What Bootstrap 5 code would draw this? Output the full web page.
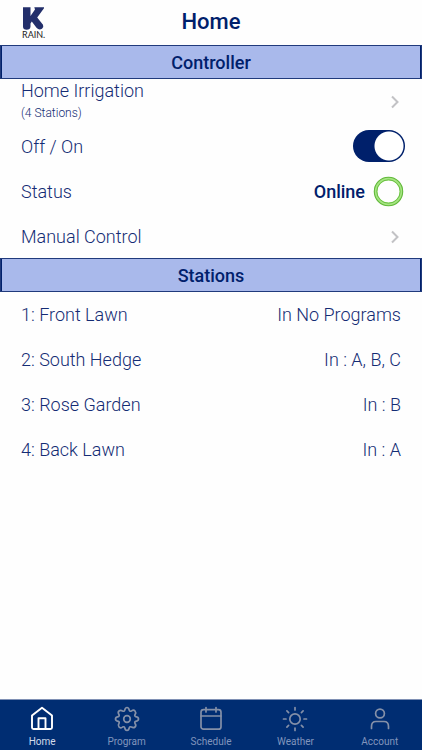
<!DOCTYPE html>
<html lang="en">
<head>
<meta charset="utf-8">
<meta name="viewport" content="width=device-width, initial-scale=1">
<title>Home</title>
<link href="https://cdn.jsdelivr.net/npm/bootstrap@5.3.0/dist/css/bootstrap.min.css" rel="stylesheet">
<style>
  :root { --navy: #00206b; --ink: #142c74; --tab: #002d72; --band: #a9b9eb; }
  body { font-family: Roboto, "Liberation Sans", sans-serif; color: var(--ink); background: #fefefe; }
  .app-header { height: 45px; padding-top: 5px; color: var(--navy); }
  .app-title { font-size: 22px; line-height: 34px; font-weight: 500; }
  .brand-logo { left: 21px; top: 6px; }
  .band-title { height: 34px; line-height: 34px; font-size: 18px; font-weight: 500; color: var(--navy);
    background: var(--band); border: 1px solid #203a7c; box-shadow: inset 1px 0 var(--navy), inset -1px 0 var(--navy); }
  .setting-list { margin-top: -1px; }
  .setting-row { height: 45px; padding: 2px 21px 0; font-size: 18px; line-height: 22px; font-weight: 300; color: var(--ink); }
  .setting-row .sub-label { font-size: 12px; }
  .status-word { font-weight: 500; color: var(--navy); }
  .chevron-icon { margin-right: 1px; }
  .status-row { padding-right: 18px; }
  .switch-row { padding-right: 17px; }
  .setting-row .form-check-input { width: 52px; height: 32px; margin: 0 0 2px; border: 0; border-radius: 16px; float: none;
    background: #b9bfce radial-gradient(circle at center, #fff 14px, transparent 15px) no-repeat left 1px center / 30px 30px; }
  .setting-row .form-check-input:checked { background-color: var(--navy);
    background-image: radial-gradient(circle at center, #fff 14px, transparent 15px); background-position: right 1px center; }
  .tab-strip { background: var(--tab); border-top: 1px solid #7f90b4; height: 51px; }
  .tab-link { color: #8195bd; font-size: 10px; line-height: 14px; padding-top: 6px; }
  .tab-link svg { color: #8490a8; margin-bottom: 3px; }
  .tab-link.current, .tab-link.current svg { color: #fff; }
  .tab-link.current span { color: #d3dbea; }
</style>
<script src="https://cdn.jsdelivr.net/npm/bootstrap@5.3.0/dist/js/bootstrap.bundle.min.js"></script>
</head>
<body class="d-flex flex-column min-vh-100">
<header class="app-header position-relative text-center">
  <svg class="brand-logo position-absolute" width="26" height="34" viewBox="0 0 26 34" role="img" aria-label="K-Rain">
    <path d="M2 1.200H9.500V10L14 3.500L13.300 1.200H23V2.200L16.200 11.500L22 18.800Q23 21.200 21 22.800Q18 24.500 15.500 21.800L10.800 15.500L9.500 17.500V20.500Q9.300 23.800 5.700 23.800Q2 23.800 2 20.500Z" fill="#232f6b"/>
    <text x="1" y="32" font-family="Lato, sans-serif" font-size="9" fill="#222">RAIN.</text>
  </svg>
  <h1 class="app-title m-0">Home</h1>
</header>

<main class="flex-grow-1">
  <section>
    <h2 class="band-title text-center m-0">Controller</h2>
    <div class="setting-list">
      <a href="#controller" class="setting-row d-flex align-items-center justify-content-between text-decoration-none">
        <span><span class="d-block">Home Irrigation</span><span class="sub-label d-block">(4 Stations)</span></span>
        <svg class="chevron-icon" width="10" height="14" viewBox="0 0 10 14" fill="none" stroke="#c2c2c5" stroke-width="2" aria-hidden="true"><path d="M2 1.500L7.500 7L2 12.500"/></svg>
      </a>
      <div class="setting-row switch-row form-switch d-flex align-items-center justify-content-between">
        <label for="power">Off / On</label>
        <input class="form-check-input" type="checkbox" role="switch" id="power" checked>
      </div>
      <div class="setting-row status-row d-flex align-items-center justify-content-between">
        <span>Status</span>
        <span class="d-flex align-items-center gap-2">
          <span class="status-word">Online</span>
          <svg width="31" height="31" viewBox="0 0 31 31" fill="none" aria-hidden="true">
            <circle cx="15.500" cy="15.500" r="12.800" stroke="#a5e581" stroke-width="3.500"/>
            <circle cx="15.500" cy="15.500" r="14.200" stroke="#62b83c" stroke-width="1.100"/>
            <circle cx="15.500" cy="15.500" r="11.700" stroke="#6abf43" stroke-width="1"/>
          </svg>
        </span>
      </div>
      <a href="#manual" class="setting-row d-flex align-items-center justify-content-between text-decoration-none">
        <span>Manual Control</span>
        <svg class="chevron-icon" width="10" height="14" viewBox="0 0 10 14" fill="none" stroke="#c2c2c5" stroke-width="2" aria-hidden="true"><path d="M2 1.500L7.500 7L2 12.500"/></svg>
      </a>
    </div>
  </section>
  <section>
    <h2 class="band-title text-center m-0">Stations</h2>
    <ul class="setting-list list-unstyled mb-0">
      <li class="setting-row d-flex align-items-center justify-content-between"><span>1: Front Lawn</span><span>In No Programs</span></li>
      <li class="setting-row d-flex align-items-center justify-content-between"><span>2: South Hedge</span><span>In : A, B, C</span></li>
      <li class="setting-row d-flex align-items-center justify-content-between"><span>3: Rose Garden</span><span>In : B</span></li>
      <li class="setting-row d-flex align-items-center justify-content-between"><span>4: Back Lawn</span><span>In : A</span></li>
    </ul>
  </section>
</main>

<nav class="tab-strip d-flex sticky-bottom" aria-label="Main">
  <a href="#home" class="tab-link current flex-fill w-100 d-flex flex-column align-items-center text-decoration-none" aria-current="page">
    <svg width="26" height="26" viewBox="0 0 26 26" fill="none" stroke="currentColor" stroke-width="1.900" stroke-linejoin="round" aria-hidden="true"><path d="M3 9.500L13 1.800L23 9.500V21.500Q23 23 21.500 23H4.500Q3 23 3 21.500Z"/><path d="M9.500 22.500V12.300H16.500V22.500"/></svg>
    <span>Home</span>
  </a>
  <a href="#program" class="tab-link flex-fill w-100 d-flex flex-column align-items-center text-decoration-none">
    <svg width="26" height="26" viewBox="0 0 26 26" fill="none" stroke="currentColor" stroke-width="1.700" stroke-linejoin="round" aria-hidden="true"><path d="M10.700 4.300Q11.200 1.500 13 1.500T15.300 4.300Q15.800 5.800 17.500 4.900Q19.700 3.500 21 5T21.100 8.500Q20.200 10.200 21.700 10.700Q24.500 11.200 24.500 13T21.700 15.300Q20.200 15.800 21.100 17.500Q22.500 19.700 21 21T17.500 21.100Q15.800 20.200 15.300 21.700Q14.800 24.500 13 24.500T10.700 21.700Q10.200 20.200 8.500 21.100Q6.300 22.500 5 21T4.900 17.500Q5.800 15.800 4.300 15.300Q1.500 14.800 1.500 13T4.300 10.700Q5.800 10.200 4.900 8.500Q3.500 6.300 5 5T8.500 4.900Q10.200 5.800 10.700 4.300Z"/><circle cx="13" cy="13" r="3.300"/></svg>
    <span>Program</span>
  </a>
  <a href="#schedule" class="tab-link flex-fill w-100 d-flex flex-column align-items-center text-decoration-none">
    <svg width="26" height="26" viewBox="0 0 26 26" fill="none" stroke="currentColor" stroke-width="1.700" stroke-linecap="round" aria-hidden="true"><rect x="3" y="3.700" width="20" height="19.500" rx="2.500"/><path d="M3 10H23M8 1.500V6M18 1.500V6"/></svg>
    <span>Schedule</span>
  </a>
  <a href="#weather" class="tab-link flex-fill w-100 d-flex flex-column align-items-center text-decoration-none">
    <svg width="26" height="26" viewBox="0 0 26 26" fill="none" stroke="currentColor" stroke-width="1.700" stroke-linecap="round" aria-hidden="true"><circle cx="13" cy="13" r="5.200"/><path d="M13 1.500V4M13 22V24.500M1.500 13H4M22 13H24.500M4.900 4.900L6.600 6.600M19.400 19.400L21.100 21.100M4.900 21.100L6.600 19.400M19.400 6.600L21.100 4.900"/></svg>
    <span>Weather</span>
  </a>
  <a href="#account" class="tab-link flex-fill w-100 d-flex flex-column align-items-center text-decoration-none">
    <svg width="26" height="26" viewBox="0 0 26 26" fill="none" stroke="currentColor" stroke-width="1.700" stroke-linecap="round" aria-hidden="true"><circle cx="13" cy="7.500" r="4.400"/><path d="M4.500 22.500V20.500Q4.500 15.500 9 15.500H17Q21.500 15.500 21.500 20.500V22.500"/></svg>
    <span>Account</span>
  </a>
</nav>
</body>
</html>
